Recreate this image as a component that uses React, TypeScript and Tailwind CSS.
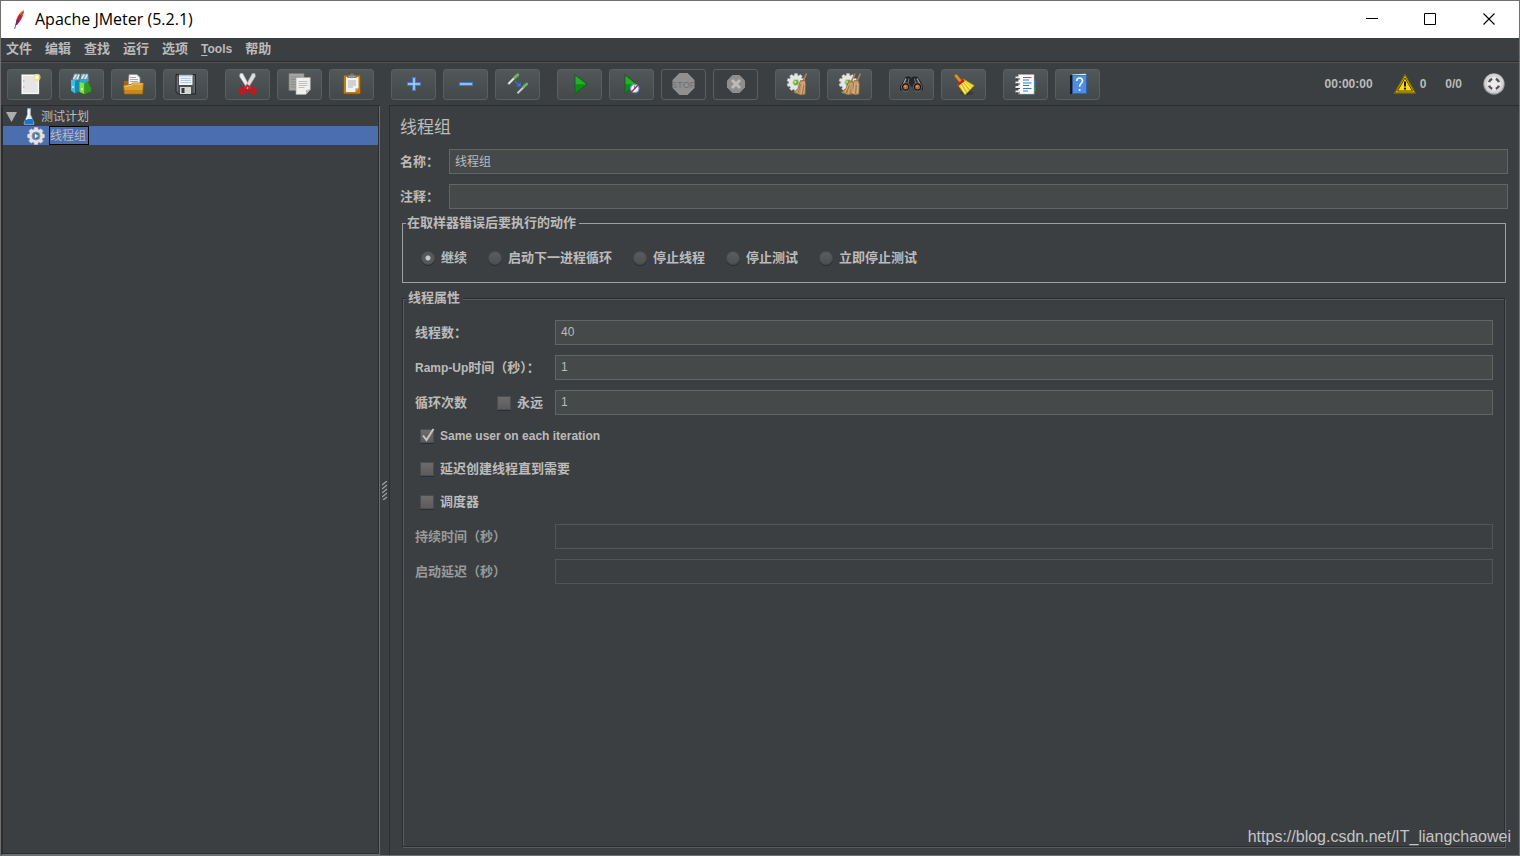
import type { ReactNode } from 'react';

const gearPoints = (cx: number, cy: number, outer: number, inner: number, teeth: number) => {
  const pts: string[] = [];
  for (let i = 0; i < teeth; i++) {
    const base = (i / teeth) * Math.PI * 2;
    const step = (Math.PI * 2) / teeth;
    [
      [-0.36, inner],
      [-0.24, outer],
      [0.24, outer],
      [0.36, inner],
    ].forEach(([f, r]) => {
      const a = base + f * step;
      pts.push(`${(cx + r * Math.sin(a)).toFixed(2)},${(cy - r * Math.cos(a)).toFixed(2)}`);
    });
  }
  return pts.join(' ');
};

function Icon({ children }: { children: ReactNode }) {
  return (
    <svg viewBox="0 0 23 23" className="h-[23px] w-[23px] shrink-0" aria-hidden="true">
      {children}
    </svg>
  );
}

const NewIcon = () => (
  <Icon>
    <rect x="3.500" y="1.500" width="17.500" height="19.500" fill="#eeeeec" stroke="#8f8f8c" strokeWidth=".7" />
    <rect x="4.300" y="2.300" width="16" height="18" fill="#e6e6e6" stroke="#fff" />
    <path d="M5.800 7.500v1M5.800 13.500v1" stroke="#888" />
    <circle cx="19" cy="4.300" r="3.600" fill="#f3e27a" opacity=".75" />
    <circle cx="19" cy="4.300" r="1.800" fill="#fffbe0" />
  </Icon>
);

const TemplatesIcon = () => (
  <Icon>
    <path d="M2 8 4 .8h5.500L10 8zM10 8l1-7.200h7L19 8z" fill="#8fa9b2" stroke="#4e7380" strokeWidth=".7" />
    <path d="m3.500 6 2.700-4.500M7 6l2.300-4.500M11.500 6l2.700-4.500M15 6l2.300-4.500" stroke="#eef4f6" strokeWidth="1.300" />
    <path d="M1 6.500 5 8v12.500l-4-3z" fill="#38c0e6" />
    <path d="M5 8l5-2v12l-5 2.500z" fill="#1589b4" />
    <path d="M9.500 6H18v5l-8 1z" fill="#2ba6d4" />
    <path d="M9.500 9l5 1.500v10.700L9.500 19z" fill="#7be834" />
    <path d="M14.500 10.500 17.500 8l3.500 7v3.500l-6.500 2.700z" fill="#2f9d1a" />
    <circle cx="3" cy="14" r=".9" fill="#e3f7fd" />
    <circle cx="12" cy="16" r="1" fill="#f0ffe4" />
  </Icon>
);

const OpenIcon = () => (
  <Icon>
    <path d="M2 8h5l1 2h12v10H2z" fill="#a8660c" />
    <path d="M7 1.500h8l3 3V16H6z" fill="#f4f4f4" stroke="#8c8c8c" strokeWidth=".6" />
    <path d="M8 4.500h6M8 6.500h8M8 8.500h8" stroke="#999" strokeWidth=".8" />
    <path d="M1.500 12.500 9 11.500l2-1.500h10.500l-1 11H2.500z" fill="#dd9f30" stroke="#9c6410" strokeWidth=".7" />
    <path d="M2.500 13.300 9.500 12.400l2-1.500h9" stroke="#f6d58b" strokeWidth=".8" fill="none" />
    <path d="M2.300 17h18.500l-.3 4h-18z" fill="#b87812" opacity=".6" />
  </Icon>
);

const SaveIcon = () => (
  <Icon>
    <path d="M2 1.500h19.500V21H4l-2-2z" fill="#4b5054" stroke="#202326" strokeWidth=".9" />
    <rect x="5" y="1.800" width="13.500" height="10.200" fill="#f2f5f8" />
    <rect x="5" y="1.800" width="13.500" height="1.600" fill="#a9c4de" />
    <path d="M6.500 5.500h10.500M6.500 7.500h10.500M6.500 9.500h10.500" stroke="#a8bccb" strokeWidth=".8" />
    <rect x="6" y="14" width="11" height="7" fill="#d4d6d4" />
    <rect x="7.500" y="15" width="3" height="5" fill="#35393b" />
    <path d="M3.300 3v15.500M20.200 3v17" stroke="#7a8085" strokeWidth=".8" />
  </Icon>
);

const CutIcon = () => (
  <Icon>
    <path d="M4 .4 6.600.2 13.900 13.800l-2.600 2L3.600 3.500z" fill="#f1f1f1" stroke="#a5a5a5" strokeWidth=".6" />
    <path d="M19 .4 16.400.2 9.100 13.800l2.600 2L19.400 3.500z" fill="#dedede" stroke="#9a9a9a" strokeWidth=".6" />
    <ellipse cx="6.700" cy="17.600" rx="3.100" ry="2.300" transform="rotate(-35 6.700 17.600)" fill="none" stroke="#d90f16" strokeWidth="2.400" />
    <ellipse cx="16.400" cy="17.600" rx="3.100" ry="2.300" transform="rotate(35 16.400 17.600)" fill="none" stroke="#d90f16" strokeWidth="2.400" />
    <path d="m8.500 15.500 3-3 3.200 3" stroke="#e0202a" strokeWidth="2.200" fill="none" />
  </Icon>
);

const CopyIcon = () => (
  <Icon>
    <path d="M1 .5h15v17H1z" fill="#a3a5a3" stroke="#7c7e7c" strokeWidth=".7" />
    <path d="M3 4h10M3 6.500h5M3 9h5M3 11.500h5M3 14h5" stroke="#868886" strokeWidth=".9" />
    <path d="M8 4.500h14.300v12l-4.500 5H8z" fill="#f0f0ef" stroke="#a4a4a4" strokeWidth=".7" />
    <path d="M10.500 8.500h9M10.500 10.500h9M10.500 12.500h9M10.500 14.500h6" stroke="#b4b4b4" strokeWidth=".8" />
    <path d="m17.800 21.500.2-4.500 4.300-.5z" fill="#b9b9b9" />
  </Icon>
);

const PasteIcon = () => (
  <Icon>
    <rect x="3.500" y="2" width="17" height="19" rx="1" fill="#c17d11" stroke="#7e500a" strokeWidth=".9" />
    <path d="M6 4h12.500v11L15 19H6z" fill="#f3f3f2" />
    <path d="M8 8h8M8 10h8M8 12h8M8 14h5" stroke="#a8a8a8" strokeWidth=".9" />
    <path d="m15 19 .3-3.500 3.200-.5z" fill="#a9a9a9" />
    <path d="M7.500 4.500V3l2.500-1h4l2.500 1v1.500z" fill="#9a9c98" stroke="#5c5d5a" strokeWidth=".6" />
    <rect x="10" y=".7" width="4" height="1.800" rx=".8" fill="#7b7c78" />
  </Icon>
);

const PlusIcon = () => (
  <Icon>
    <path d="M10.700 4.500h2.600v5.200h5.200v2.600h-5.200v5.200h-2.600v-5.200H5.500V9.700h5.200z" fill="#b5d3f5" stroke="#3b7bd0" strokeWidth="1.100" />
  </Icon>
);

const MinusIcon = () => (
  <Icon>
    <rect x="5.500" y="9.700" width="13" height="2.600" fill="#b5d3f5" stroke="#3b7bd0" strokeWidth="1.100" />
  </Icon>
);

const ToggleIcon = () => (
  <Icon>
    <path d="m2.300 11 7-7" stroke="#e2e4e0" strokeWidth="2.200" />
    <path d="m8.700 4.600 3-2.800" stroke="#72b35a" strokeWidth="3" strokeLinecap="round" />
    <path d="m11.500 20.300 7-7" stroke="#c8cac6" strokeWidth="2" />
    <path d="m17.700 13.800 3-2.800" stroke="#72b35a" strokeWidth="2.800" strokeLinecap="round" />
    <path d="m9 8.300 3.500 3" stroke="#2c78e0" strokeWidth="1.600" strokeDasharray="1.800 .6" />
    <path d="M14.800 9v4.500H10z" fill="#2c78e0" />
  </Icon>
);

const PlayIcon = () => (
  <Icon>
    <path d="M7 1.700v19L19.300 11z" fill="#0a8f12" stroke="#045c0a" strokeWidth=".6" />
    <path d="M7.600 3v8.200h10.500z" fill="#3fc23f" opacity=".6" />
  </Icon>
);

const PlayNoPauseIcon = () => (
  <Icon>
    <path d="M5 1.700v18.500L17 11z" fill="#0a8f12" stroke="#045c0a" strokeWidth=".6" />
    <path d="M5.600 3v8.200h10.200z" fill="#3fc23f" opacity=".6" />
    <circle cx="14.700" cy="15.500" r="4.200" fill="#f2f6fb" stroke="#6499d4" strokeWidth="1.200" />
    <path d="M14.700 12.600v3" stroke="#456fa8" />
    <path d="m11 19.500 7.500-8" stroke="#d5202a" strokeWidth="1.300" />
  </Icon>
);

const StopIcon = () => (
  <Icon>
    <path d="M7.500 0h8L22.500 7v8l-7 7h-8L.5 15V7z" fill="#909090" />
    <text x="11.500" y="14.500" textAnchor="middle" fontFamily="Liberation Sans Narrow, Liberation Sans" fontSize="9" fill="#6e6e6e">
      STOP
    </text>
  </Icon>
);

const ShutdownIcon = () => (
  <Icon>
    <path d="M8.500 2h7L21 7.500v7L15.500 20h-7L3 14.500v-7z" fill="#8e8e8e" />
    <path d="m8 7 8 8m0-8-8 8" stroke="#bdbdbd" strokeWidth="2.800" />
  </Icon>
);

const Gear = () => (
  <>
    <polygon points={gearPoints(10, 9.5, 9, 7.2, 10)} fill="#e6e6e6" stroke="#c4c4c4" strokeWidth=".5" />
    <circle cx="10" cy="9.500" r="3.200" fill="#6fae33" stroke="#c9d8bd" strokeWidth="1" />
    <circle cx="9.300" cy="9" r="1.200" fill="#b9ec83" />
  </>
);

const ClearIcon = () => (
  <Icon>
    <Gear />
    <path d="M20.500.5 17.200 8" stroke="#a98053" strokeWidth="1.800" />
    <path d="M14.500 7.500h4.500l.8 4-.7 10-4.500.5-6.800-2.500 4-4z" fill="#bd9462" stroke="#7d5b35" strokeWidth=".6" />
    <path d="m15.500 9-4 10.500M17 9l-2 12M18.500 9l-.7 12" stroke="#e0bd8d" strokeWidth=".7" />
    <path d="m14.500 11-2.500 9M18 12l-1.500 9" stroke="#7d5b35" strokeWidth=".6" />
  </Icon>
);

const ClearAllIcon = () => (
  <Icon>
    <Gear />
    <path d="M17 .7 13.500 8M22.300.7 19 8" stroke="#a98053" strokeWidth="1.700" />
    <path d="M10.500 8h4l1 4-.5 9-5 1L3 19.500l5-4z" fill="#b98e5c" stroke="#7d5b35" strokeWidth=".6" />
    <path d="M16 7.500h4.500l1 4-.5 9.500-3.500 1-5-2 2-3z" fill="#c39b69" stroke="#7d5b35" strokeWidth=".6" />
    <path d="m11 11-4 8.500M12.500 10l-2.500 11M14 10v10M17 10l-1.500 11M19.500 10v10" stroke="#e0bd8d" strokeWidth=".7" />
    <path d="m11.500 12-3 8M18.300 12l-.8 9" stroke="#7d5b35" strokeWidth=".6" />
  </Icon>
);

const SearchIcon = () => (
  <Icon>
    <path d="M6 4h4l1.500 2L13 4h4l3 4 2.500 5v4h-9l-1-4h-2l-1 4h-9v-4L4 8z" fill="#26292b" stroke="#111" strokeWidth=".6" />
    <path d="M6 5.500 3.500 11M17 5.500l3 5.500" stroke="#a6a9ab" strokeWidth="1.300" />
    <path d="M9 5.500 8 10M14.500 5.500l1 4.500" stroke="#77797b" />
    <circle cx="5.700" cy="14" r="4.300" fill="#141617" stroke="#7c7f81" strokeWidth=".8" />
    <circle cx="17.500" cy="14" r="4.300" fill="#141617" stroke="#7c7f81" strokeWidth=".8" />
    <circle cx="5.700" cy="14" r="2.500" fill="#b4672f" />
    <circle cx="17.500" cy="14" r="2.500" fill="#b4672f" />
    <circle cx="5.200" cy="13.300" r=".9" fill="#efaa6a" />
    <circle cx="17" cy="13.300" r=".9" fill="#efaa6a" />
  </Icon>
);

const BroomIcon = () => (
  <Icon>
    <ellipse cx="15" cy="20" rx="7" ry="2" fill="#25282a" opacity=".4" />
    <path d="m4 2.800 4.500 5.500" stroke="#8d5a18" strokeWidth="4" strokeLinecap="round" />
    <path d="m4 2.800 4.500 5.500" stroke="#cf9344" strokeWidth="2.600" strokeLinecap="round" />
    <path d="M5.500 11.500 11.500 6 22.300 12.500 13 22z" fill="#efd92f" stroke="#a78d0c" strokeWidth=".7" />
    <path d="m8.500 11.500 4.500 9M10.500 10l5.500 8.500M12 9l7 7" stroke="#fff48f" strokeWidth=".8" />
    <path d="m9.500 11 5.500 9M11.500 9.500l6 7.500" stroke="#b89d13" strokeWidth=".6" />
    <path d="m5.800 12 6.200-5" stroke="#d01a1a" strokeWidth="2.300" />
  </Icon>
);

const FunctionIcon = () => (
  <Icon>
    <path d="M19 7.500h3v5.500h-3z" fill="#1868d5" />
    <path d="M19 14h3v4.500h-3z" fill="#169321" />
    <rect x="4.500" y="1.700" width="15.500" height="19.300" fill="#fbfbfb" stroke="#bbb" strokeWidth=".6" />
    <path d="M1.500 4.500h5M1.500 9.500h5M1.500 14h5M1.500 18.500h5" stroke="#eceeef" strokeWidth="2" />
    <path d="M2 6h4M2 11h4M2 15.500h4M2 20h4" stroke="#35393a" strokeWidth=".9" />
    <path d="M9 4.500h8.500M9 7h6M9 10h8.500M9 12.500h6M9 15.500h8.500M9 18h5" stroke="#3576cf" strokeWidth="1" />
  </Icon>
);

const HelpIcon = () => (
  <Icon>
    <path d="M4 2.500 7 1v19.500l-3 .8z" fill="#15191d" />
    <rect x="6.500" y="2" width="14" height="18.700" fill="#4f8de0" stroke="#2a5cab" strokeWidth=".7" />
    <path d="M5 1.400 19.500.8l1 1.200H6.500z" fill="#dfe7f0" />
    <path d="M10.700 8C10.700 6 12 5 13.500 5s3 1 3 2.800c0 2.700-2.900 2.600-2.900 6" fill="none" stroke="#f3f7fd" strokeWidth="1.700" />
    <circle cx="13.600" cy="17" r="1.100" fill="#f3f7fd" />
  </Icon>
);

type Tool = { label: string; icon: ReactNode; disabled?: boolean };

const toolGroups: Tool[][] = [
  [
    { label: '新建', icon: <NewIcon /> },
    { label: '模板', icon: <TemplatesIcon /> },
    { label: '打开', icon: <OpenIcon /> },
    { label: '保存', icon: <SaveIcon /> },
  ],
  [
    { label: '剪切', icon: <CutIcon /> },
    { label: '复制', icon: <CopyIcon /> },
    { label: '粘贴', icon: <PasteIcon /> },
  ],
  [
    { label: '展开', icon: <PlusIcon /> },
    { label: '折叠', icon: <MinusIcon /> },
    { label: '切换', icon: <ToggleIcon /> },
  ],
  [
    { label: '启动', icon: <PlayIcon /> },
    { label: '不停顿启动', icon: <PlayNoPauseIcon /> },
    { label: '停止', icon: <StopIcon />, disabled: true },
    { label: '关闭', icon: <ShutdownIcon />, disabled: true },
  ],
  [
    { label: '清除', icon: <ClearIcon /> },
    { label: '清除全部', icon: <ClearAllIcon /> },
  ],
  [
    { label: '查找', icon: <SearchIcon /> },
    { label: '重置查找', icon: <BroomIcon /> },
  ],
  [
    { label: '函数助手', icon: <FunctionIcon /> },
    { label: '帮助', icon: <HelpIcon /> },
  ],
];

function TitleBar() {
  return (
    <header className="flex h-[37px] items-center bg-white text-black">
      <svg viewBox="0 0 12 20" className="ml-3 h-5 w-3" aria-hidden="true">
        <path d="M11 .5C8 1 5 5 3.500 9.500L2.500 15l1.800-.5C7.500 11 10.500 6 11 .5z" fill="#d22128" />
        <path d="M11 .5C9.500.7 8 2 6.500 4l2.500 2c1-1.700 1.800-3.500 2-5.500z" fill="#f0802a" />
        <path d="M3.500 9.500 2.500 15l1.800-.5 3-4z" fill="#8b2a78" />
        <path d="M10 2 4 12 1.500 19" stroke="#5b2a70" strokeWidth=".8" fill="none" />
      </svg>
      <h1 className="ml-2.5 pb-0.5 font-['Open_Sans',sans-serif] text-base leading-5">Apache JMeter (5.2.1)</h1>
      <div className="ml-auto flex h-full">
        <button aria-label="最小化" className="flex w-[59px] items-center justify-center">
          <svg viewBox="0 0 13 13" className="h-[13px] w-[13px]">
            <path d="M.5 5.500h12" stroke="#000" shapeRendering="crispEdges" />
          </svg>
        </button>
        <button aria-label="最大化" className="flex w-[59px] items-center justify-center">
          <svg viewBox="0 0 13 13" className="h-[13px] w-[13px]">
            <path d="M.5.5h11v11H.5z" stroke="#000" fill="none" />
          </svg>
        </button>
        <button aria-label="关闭" className="flex w-[59px] items-center justify-center">
          <svg viewBox="0 0 13 13" className="h-[13px] w-[13px]">
            <path d="m.5.5 11 11m0-11-11 11" stroke="#000" strokeWidth="1.100" />
          </svg>
        </button>
      </div>
    </header>
  );
}

function MenuBar() {
  return (
    <nav className="flex h-6 items-center gap-[13px] border-b border-[#2a2c2d] pb-0.5 pl-[5px] text-[13px] font-bold leading-4">
      {['文件', '编辑', '查找', '运行', '选项'].map((name) => (
        <button key={name}>{name}</button>
      ))}
      <button className="text-xs leading-4">
        <span className="underline underline-offset-2">T</span>ools
      </button>
      <button>帮助</button>
    </nav>
  );
}

function ToolBar() {
  return (
    <div className="flex h-[43px] items-center border-t border-[#555250] pl-1.5 pr-3.5">
      <div className="flex gap-[17px]">
        {toolGroups.map((group, i) => (
          <div key={i} className="flex gap-[7px]">
            {group.map((tool) => (
              <button
                key={tool.label}
                aria-label={tool.label}
                disabled={tool.disabled}
                className="flex h-[31px] w-[45px] items-center justify-center rounded-[3px] border border-[#5b5f61] bg-linear-to-b from-[#525759] to-[#43484a] disabled:bg-none"
              >
                {tool.icon}
              </button>
            ))}
          </div>
        ))}
      </div>
      <div className="ml-auto flex items-center text-xs font-bold">
        <span>00:00:00</span>
        <button className="ml-[21px] flex items-center gap-1">
          <svg viewBox="0 0 22 20" className="h-5 w-[22px]" aria-hidden="true">
            <path d="M11 .8 21.300 19H.7z" fill="#e8c60a" stroke="#7d6a08" strokeWidth="1.300" strokeLinejoin="round" />
            <path d="M11 4 18.500 17h-15z" fill="#f8d90c" stroke="#3c3402" strokeWidth=".9" />
            <path d="M11 7.500v5" stroke="#1d1a02" strokeWidth="2" />
            <circle cx="11" cy="14.700" r="1.100" fill="#1d1a02" />
          </svg>
          0
        </button>
        <span className="ml-[19px]">0/0</span>
        <svg viewBox="0 0 22 22" className="ml-[21px] h-[22px] w-[22px]" aria-hidden="true">
          <circle cx="11" cy="11" r="10.700" fill="#9c9c9c" />
          <circle cx="11" cy="10.500" r="9.800" fill="#d4d4d4" />
          <circle cx="11" cy="10.800" r="7" fill="#ececec" />
          <circle
            cx="11"
            cy="10.800"
            r="5.300"
            fill="none"
            stroke="#555"
            strokeWidth="2.400"
            pathLength="80"
            strokeDasharray="11 9"
            strokeDashoffset="-4.500"
          />
        </svg>
      </div>
    </div>
  );
}

function TestTree() {
  return (
    <aside className="w-[379px] shrink-0 border-l border-t border-[#2b2d2e]">
      <div className="h-full border-b border-r border-[#6b6e70]">
        <ul role="tree" className="h-full border-b border-l border-r border-[#2b2d2e] pt-px text-xs leading-[19px]">
          <li role="treeitem" aria-expanded="true" className="flex h-[19px] items-center pl-[3px]">
            <svg viewBox="0 0 11 10" className="h-2.5 w-[11px]" aria-hidden="true">
              <path d="M0 0h11L5.500 10z" fill="#adadad" />
            </svg>
            <svg viewBox="0 0 12 17" className="ml-1.5 h-[17px] w-3" aria-hidden="true">
              <path d="M4.500.5h3v6L11 15c.3 1-.3 1.500-1 1.500H2c-.7 0-1.300-.5-1-1.500l3.500-8.500z" fill="#dfe9f2" stroke="#9db0c0" strokeWidth=".6" />
              <path d="M2.500 11h7l1.200 4.300c0 .7-.4 1-1 1H2.300c-.6 0-1-.3-1-1z" fill="#1b74d4" />
              <path d="M5.300 2v6L3.500 12" stroke="#fff" fill="none" />
            </svg>
            <span className="ml-[6px] pt-px">测试计划</span>
          </li>
          <li role="treeitem" aria-selected="true" className="flex h-[19px] items-center bg-[#4b6eaf] pl-6">
            <svg viewBox="0 0 18 18" className="h-[18px] w-[18px]" aria-hidden="true">
              <polygon points={gearPoints(9, 9, 8.8, 7, 8)} fill="#e4e4e4" stroke="#b9b9b9" strokeWidth=".5" />
              <circle cx="9" cy="9" r="4" fill="#5578a8" stroke="#8f9aa8" strokeWidth="1" />
              <path d="M7.800 6.800 11.300 9l-3.500 2.200z" fill="#eaf1fa" />
            </svg>
            <span className="ml-1 flex h-full items-center border border-black pr-0.5 pt-px">线程组</span>
          </li>
        </ul>
      </div>
    </aside>
  );
}

function Divider() {
  return (
    <div role="separator" className="flex w-[9px] shrink-0 items-center justify-center">
      <svg viewBox="0 0 5 19" className="mt-5 h-[19px] w-[5px]" aria-hidden="true">
        <path d="M0 4 5 0M0 8l5-4M0 12l5-4M0 16l5-4M1 19l4-3" stroke="#a0a2a3" strokeWidth="1.300" />
      </svg>
    </div>
  );
}

function TextField({ id, value = '', disabled }: { id: string; value?: string; disabled?: boolean }) {
  return (
    <input
      id={id}
      type="text"
      defaultValue={value}
      disabled={disabled}
      className="h-[25px] min-w-0 flex-1 border border-[#646464] bg-[#45494a] px-[5px] pb-0.5 text-xs font-normal text-[#bbbbbb] outline-none disabled:border-[#515557] disabled:bg-transparent"
    />
  );
}

function CheckBox({ label, checked, latin }: { label: string; checked?: boolean; latin?: boolean }) {
  return (
    <label className="flex items-center gap-1.5">
      <span className="relative flex">
        <input
          type="checkbox"
          defaultChecked={checked}
          className="peer h-3.5 w-3.5 appearance-none border border-[#4b4e50] bg-linear-to-b from-[#6c6c6c] to-[#5b5b5b] shadow-[0_1px_0_#2c2e2f]"
        />
        <svg viewBox="0 0 14 14" className="pointer-events-none absolute inset-0 hidden h-3.5 w-3.5 overflow-visible peer-checked:block">
          <path d="m3 6.500 3.500 4.500L13.500 0" stroke="#c4c4c4" strokeWidth="2" fill="none" />
        </svg>
      </span>
      <span className={latin ? 'text-xs leading-5' : ''}>{label}</span>
    </label>
  );
}

function ThreadGroupPanel() {
  const actions = ['继续', '启动下一进程循环', '停止线程', '停止测试', '立即停止测试'];
  return (
    <main className="flex min-w-0 flex-1 flex-col border-l border-t border-[#2b2d2e] pb-2 pl-2.5 pr-[11px] pt-[9px] text-[13px] font-bold leading-5">
      <h2 className="text-[17px] font-normal leading-[26px]">线程组</h2>
      <div className="mt-2 flex items-center">
        <label htmlFor="name" className="w-[49px]">名称：</label>
        <TextField id="name" value="线程组" />
      </div>
      <div className="mt-2.5 flex items-center">
        <label htmlFor="comment" className="w-[49px]">注释：</label>
        <TextField id="comment" />
      </div>

      <fieldset className="mx-0.5 mt-1 border border-[#a0a0a0] pb-3.5">
        <legend className="ml-[3px] pl-px pr-[3px] leading-5">在取样器错误后要执行的动作</legend>
        <div className="flex gap-[21px] pl-[18px] pt-[15px]">
          {actions.map((action, i) => (
            <label key={action} className="flex items-center gap-1.5">
              <input
                type="radio"
                name="on-error"
                defaultChecked={i === 0}
                className="h-3.5 w-3.5 appearance-none rounded-full border border-[#46494b] bg-linear-to-b from-[#5a5d5f] to-[#4c5052] shadow-[0_1px_0_#2c2e2f] checked:bg-[radial-gradient(circle,#c8c8c8_2px,#565a5c_3px)]"
              />
              {action}
            </label>
          ))}
        </div>
      </fieldset>

      <fieldset className="ml-0.5 mr-[3px] mt-[5px] flex-1 border border-[#2b2d2e] shadow-[1px_1px_0_#595c5e,inset_1px_1px_0_#595c5e]">
        <legend className="ml-[3px] bg-[#3c3f41] pl-0.5 pr-[3px] leading-5">线程属性</legend>
        <div className="pl-3 pr-[11px]">
          <div className="flex flex-col gap-2.5 pt-3">
            <div className="flex items-center">
              <label htmlFor="threads" className="w-[140px]">线程数：</label>
              <TextField id="threads" value="40" />
            </div>
            <div className="flex items-center">
              <label htmlFor="ramp" className="w-[140px]">
                <span className="text-xs">Ramp-Up</span>时间（秒）：
              </label>
              <TextField id="ramp" value="1" />
            </div>
            <div className="flex items-center">
              <div className="flex w-[140px] justify-between pr-3">
                <label htmlFor="loops">循环次数</label>
                <CheckBox label="永远" />
              </div>
              <TextField id="loops" value="1" />
            </div>
          </div>
          <div className="mt-1 flex flex-col items-start pl-[5px]">
            <div className="flex h-[33px] items-center">
              <CheckBox label="Same user on each iteration" checked latin />
            </div>
            <div className="flex h-[33px] items-center">
              <CheckBox label="延迟创建线程直到需要" />
            </div>
            <div className="flex h-[33px] items-center">
              <CheckBox label="调度器" />
            </div>
          </div>
          <div className="mt-1.5 flex flex-col gap-2.5 text-[#999999]">
            <div className="flex items-center">
              <label htmlFor="duration" className="w-[140px]">持续时间（秒）</label>
              <TextField id="duration" disabled />
            </div>
            <div className="flex items-center">
              <label htmlFor="delay" className="w-[140px]">启动延迟（秒）</label>
              <TextField id="delay" disabled />
            </div>
          </div>
        </div>
      </fieldset>
    </main>
  );
}

export default function App() {
  return (
    <div className="relative flex min-h-screen flex-col border border-[#6f6f6f] bg-[#3c3f41] font-['Liberation_Sans','Noto_Sans_CJK_SC',sans-serif] text-[#bbbbbb]">
      <TitleBar />
      <MenuBar />
      <ToolBar />
      <div className="flex flex-1">
        <TestTree />
        <Divider />
        <ThreadGroupPanel />
      </div>
      <a
        href="https://blog.csdn.net/IT_liangchaowei"
        className="absolute bottom-2 right-2 text-base leading-5 text-[#c4c5c6]"
      >
        https://blog.csdn.net/IT_liangchaowei
      </a>
    </div>
  );
}
